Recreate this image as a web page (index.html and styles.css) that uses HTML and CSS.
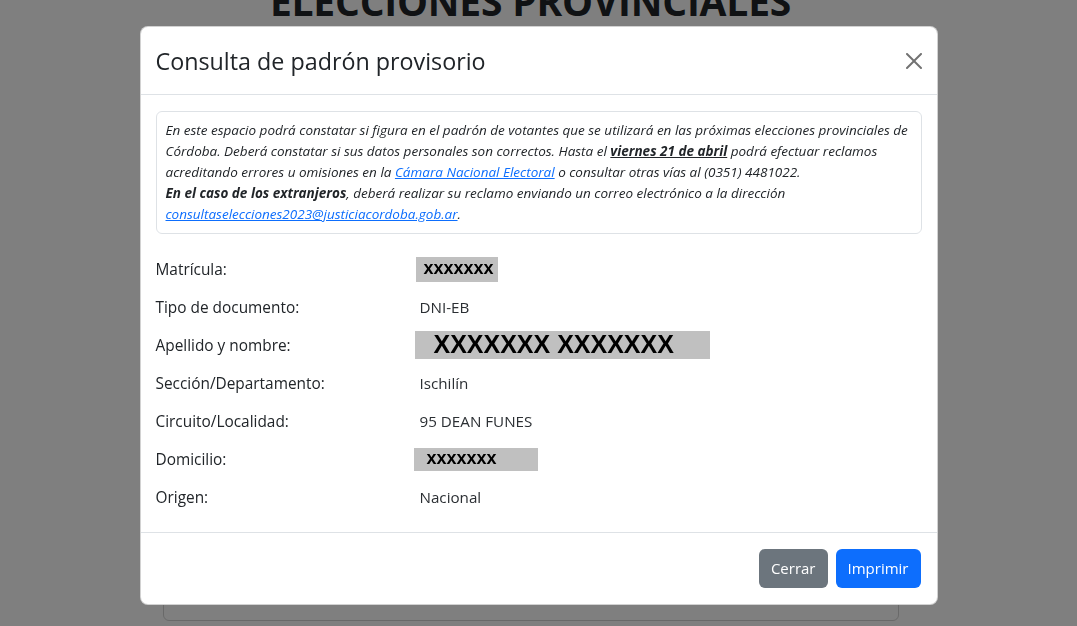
FILE: index.html
```html
<!DOCTYPE html>
<html lang="es">
<head>
    <meta charset="UTF-8">
    <meta name="viewport" content="width=device-width, initial-scale=1.0">
    <title>Consulta de padrón provisorio</title>
    <link rel="stylesheet" href="styles.css">
</head>
<body>
    <div class="page">
        <h1 class="page-title">ELECCIONES PROVINCIALES</h1>
        <div class="page-card"></div>
    </div>

    <div class="backdrop"></div>

    <div class="modal">
        <div class="modal-dialog">
            <div class="modal-content">
                <div class="modal-header">
                    <h4 class="modal-title">Consulta de padrón provisorio</h4>
                    <button type="button" class="btn-close" aria-label="Cerrar">
                        <svg viewBox="0 0 16 16" width="16" height="16"><path d="M.293.293a1 1 0 0 1 1.414 0L8 6.586 14.293.293a1 1 0 1 1 1.414 1.414L9.414 8l6.293 6.293a1 1 0 0 1-1.414 1.414L8 9.414l-6.293 6.293a1 1 0 0 1-1.414-1.414L6.586 8 .293 1.707a1 1 0 0 1 0-1.414z"/></svg>
                    </button>
                </div>
                <div class="modal-body">
                    <div class="notice">
                        En este espacio podrá constatar si figura en el padrón de votantes que se utilizará en las próximas elecciones provinciales de Córdoba. Deberá constatar si sus datos personales son correctos. Hasta el <b><u>viernes 21 de abril</u></b> podrá efectuar reclamos acreditando errores u omisiones en la <a href="#">Cámara Nacional Electoral</a> o consultar otras vías al (0351) 4481022.<br>
                        <b>En el caso de los extranjeros</b>, deberá realizar su reclamo enviando un correo electrónico a la dirección <a href="#">consultaselecciones2023@justiciacordoba.gob.ar</a>.
                    </div>

                    <div class="data-row">
                        <div class="data-label">Matrícula:</div>
                        <div class="data-value"><span class="redacted redacted-sm">xxxxxxx</span></div>
                    </div>
                    <div class="data-row">
                        <div class="data-label">Tipo de documento:</div>
                        <div class="data-value">DNI-EB</div>
                    </div>
                    <div class="data-row">
                        <div class="data-label">Apellido y nombre:</div>
                        <div class="data-value"><span class="redacted redacted-lg">XXXXXXX XXXXXXX</span></div>
                    </div>
                    <div class="data-row">
                        <div class="data-label">Sección/Departamento:</div>
                        <div class="data-value">Ischilín</div>
                    </div>
                    <div class="data-row">
                        <div class="data-label">Circuito/Localidad:</div>
                        <div class="data-value">95 DEAN FUNES</div>
                    </div>
                    <div class="data-row">
                        <div class="data-label">Domicilio:</div>
                        <div class="data-value"><span class="redacted redacted-md">xxxxxxx</span></div>
                    </div>
                    <div class="data-row">
                        <div class="data-label">Origen:</div>
                        <div class="data-value">Nacional</div>
                    </div>
                </div>
                <div class="modal-footer">
                    <button type="button" class="btn btn-secondary">Cerrar</button>
                    <button type="button" class="btn btn-primary">Imprimir</button>
                </div>
            </div>
        </div>
    </div>
</body>
</html>
```

FILE: styles.css
```css
/* Base */
body {
    font-family: "Open Sans", "Noto Sans", sans-serif;
    margin: 0;
    padding: 0;
    background-color: #fff;
    color: #212529;
    font-size: 16px;
    line-height: 1.5;
    overflow: hidden;
}

/* Page behind the modal */
.page {
    width: 736px;
    margin: 0 auto;
    padding-right: 16px;
}

.page-title {
    margin: -22px 0 0;
    text-align: center;
    font-size: 39px;
    font-weight: 700;
    line-height: 1.2;
    color: #212529;
    letter-spacing: -0.2px;
}

.page-card {
    margin-top: 4px;
    height: 590px;
    border: 1px solid rgba(0, 0, 0, 0.175);
    border-radius: 6px;
}

.backdrop {
    position: fixed;
    inset: 0;
    background-color: rgba(0, 0, 0, 0.5);
}

/* Modal */
.modal {
    position: fixed;
    inset: 0;
}

.modal-dialog {
    width: 798px;
    margin: 26px auto;
}

.modal-content {
    background: #fff;
    border: 1px solid rgba(0, 0, 0, 0.175);
    border-radius: 8px;
    overflow: hidden;
}

.modal-header {
    display: flex;
    align-items: center;
    justify-content: space-between;
    padding: 16px 15px;
    height: 35px;
    border-bottom: 1px solid #dee2e6;
}

.modal-title {
    margin: 0;
    font-size: 23.3px;
    font-weight: 400;
    line-height: 1.5;
    padding-top: 1px;
}

.btn-close {
    background: none;
    border: none;
    padding: 4px;
    margin-right: -4px;
    cursor: pointer;
    display: flex;
}

.btn-close svg {
    fill: #000;
    opacity: 0.55;
}

.modal-body {
    padding: 16px 15px;
}

.notice {
    border: 1px solid #dee2e6;
    border-radius: 6px;
    padding: 8px 9px;
    margin-bottom: 16px;
    font-size: 13.5px;
    font-style: italic;
    line-height: 21px;
    color: #212529;
}

.notice a {
    color: #0d6efd;
}

.data-row {
    display: grid;
    grid-template-columns: 264px 1fr;
    height: 38px;
    align-items: center;
}

.data-label {
    font-weight: 500;
    font-size: 15.4px;
    padding-top: 2px;
}

.data-value {
    font-size: 15.2px;
    font-weight: 400;
    color: #2b2f33;
}

/* Redacted values */
.redacted {
    display: inline-flex;
    align-items: center;
    box-sizing: border-box;
    background-color: #c0c0c0;
    font-family: "Liberation Sans", Arial, sans-serif;
    font-weight: 700;
    color: #000;
    line-height: 1;
}

.redacted-sm {
    margin-left: -4px;
    width: 82px;
    height: 25px;
    padding: 0 0 3px 8px;
    font-size: 18px;
}

.redacted-lg {
    margin-left: -5px;
    width: 295px;
    height: 28px;
    padding-left: 19px;
    font-size: 25px;
}

.redacted-md {
    margin-left: -6px;
    width: 124px;
    height: 23px;
    padding: 0 0 3px 13px;
    font-size: 18px;
}

/* Footer */
.modal-footer {
    display: flex;
    justify-content: flex-end;
    gap: 8px;
    padding: 16px;
    border-top: 1px solid #dee2e6;
}

.btn {
    font-family: inherit;
    font-size: 15px;
    line-height: 1.5;
    padding: 7px 11px;
    border: 1px solid transparent;
    border-radius: 6px;
    color: #fff;
    cursor: pointer;
}

.btn-secondary {
    background-color: #6c757d;
}

.btn-primary {
    background-color: #0d6efd;
}
```
